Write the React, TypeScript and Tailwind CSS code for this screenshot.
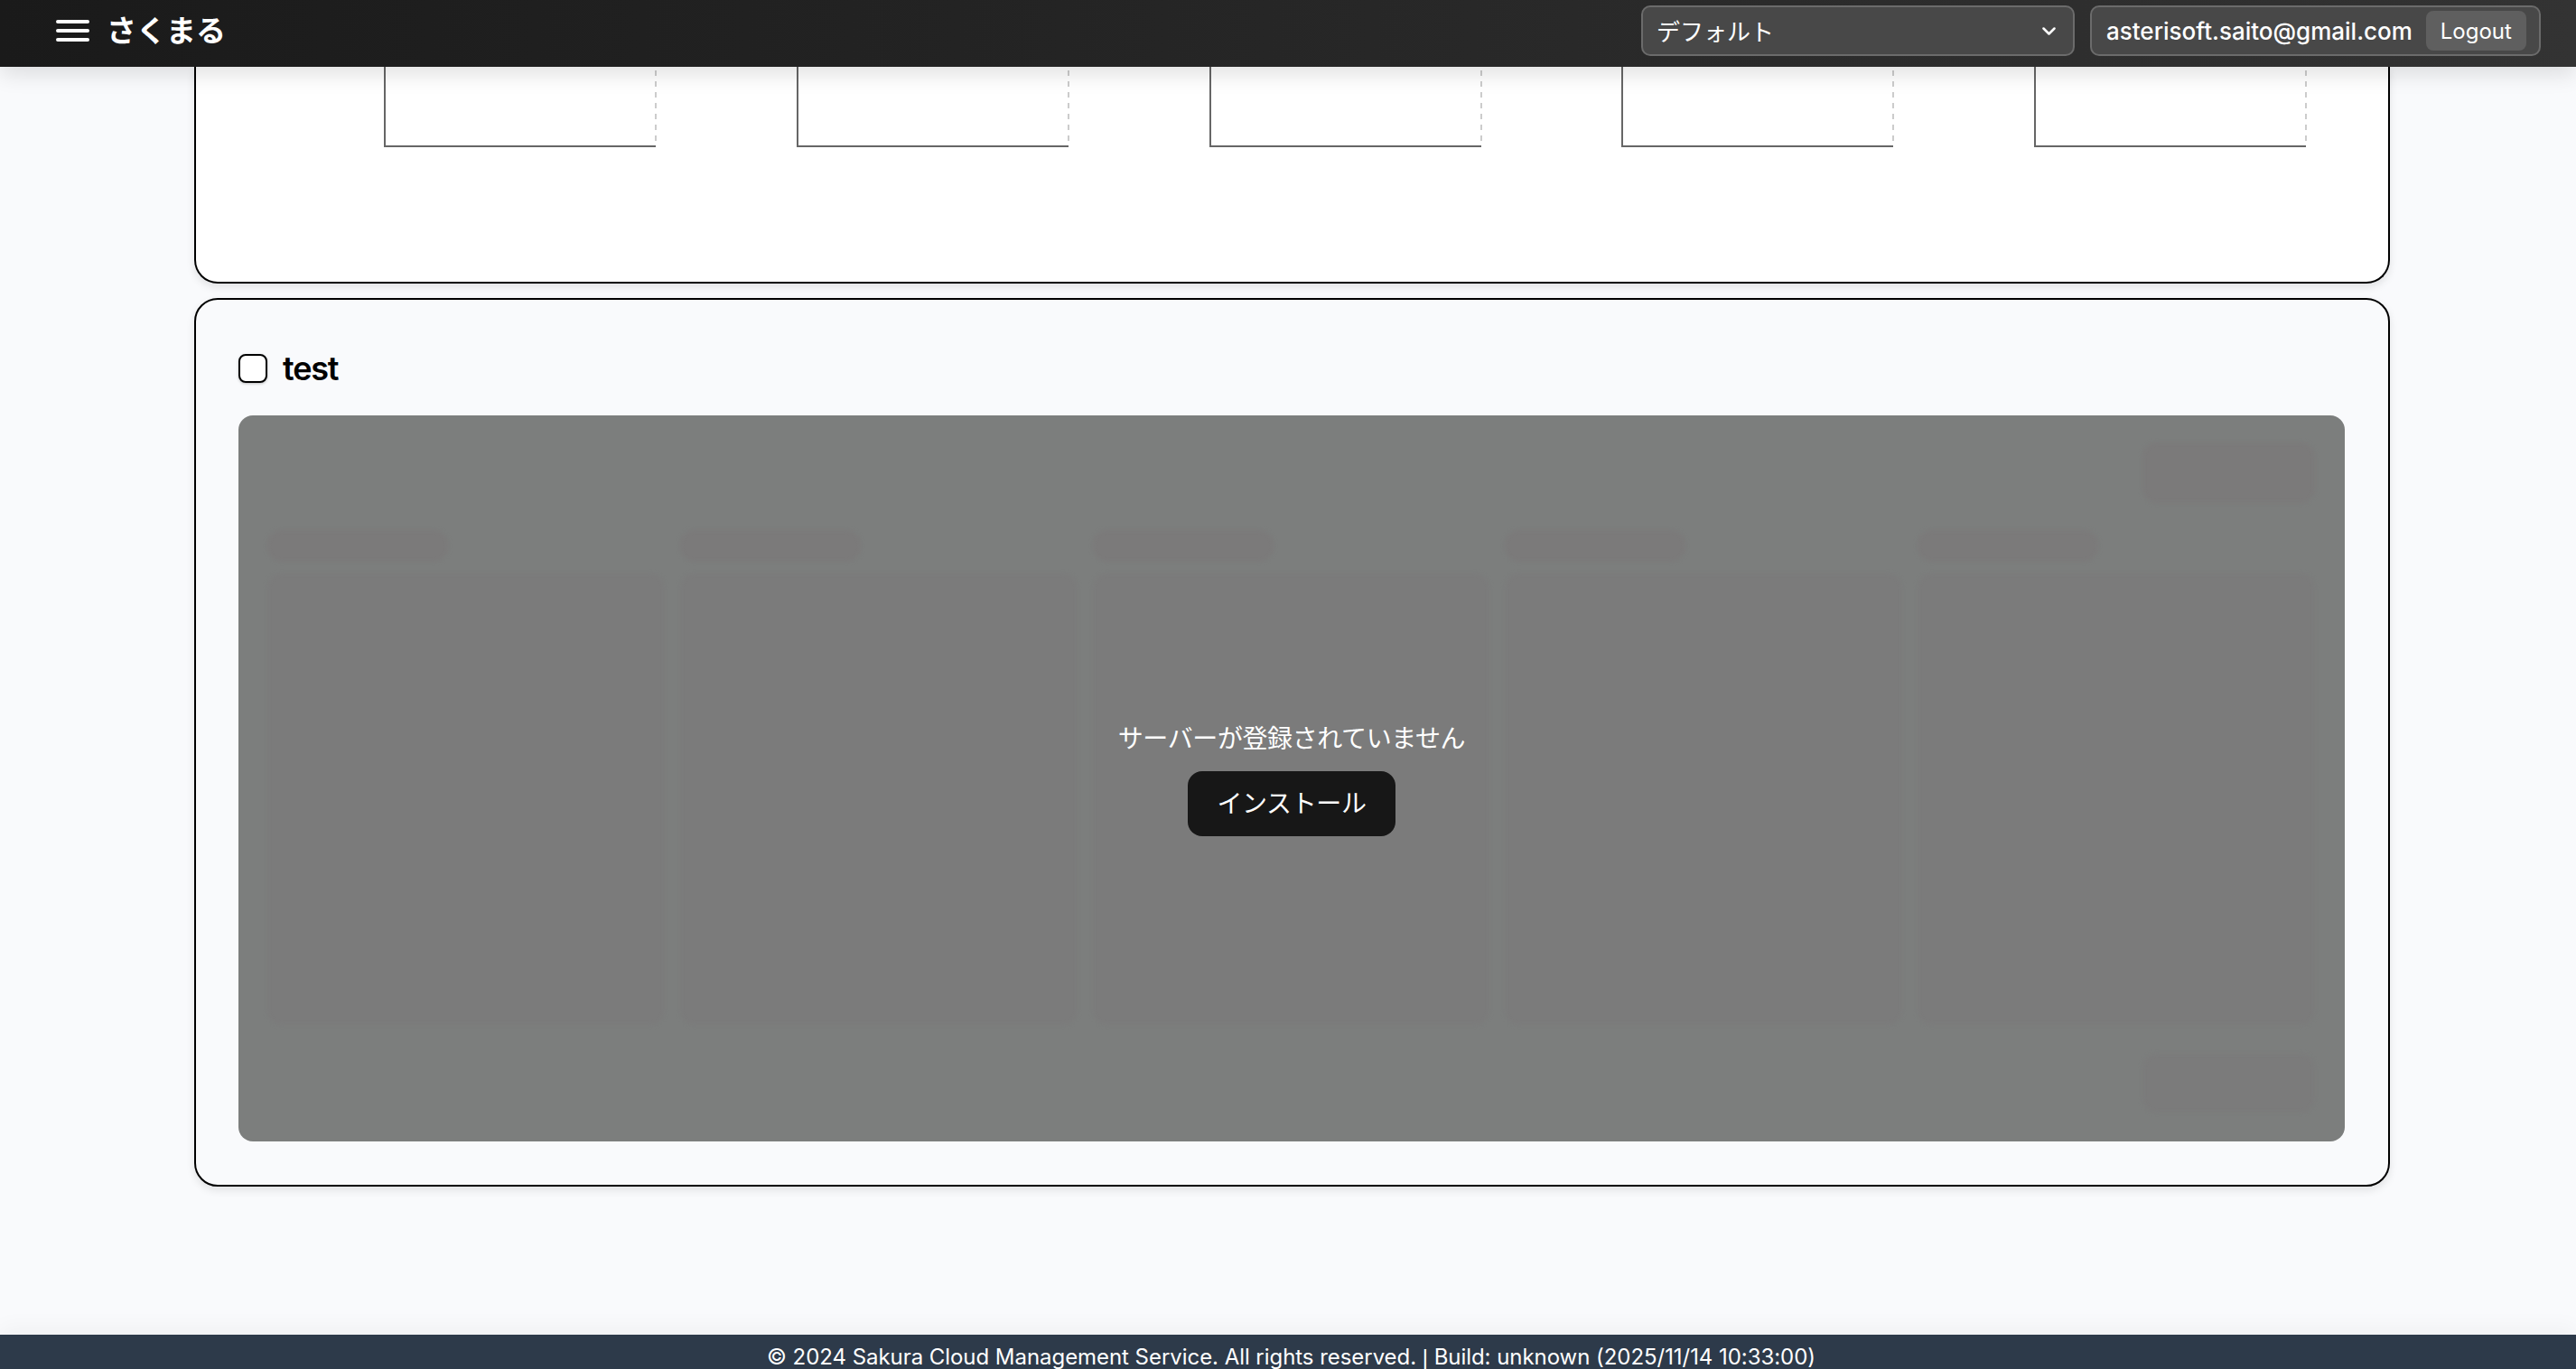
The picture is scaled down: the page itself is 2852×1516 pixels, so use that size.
const columns = [0, 1, 2, 3, 4];

const Header = () => (
  <header className="relative z-10 flex h-[74px] shrink-0 items-center justify-between bg-gradient-to-r from-[#1a1a1a] to-[#333333] pb-[6px] pl-[62px] pr-[39px] text-white shadow-[0_8px_24px_rgba(0,0,0,0.12)]">
    <div className="flex items-center gap-[19px]">
      <svg width="37" height="24" viewBox="0 0 37 24" fill="none" stroke="white" strokeWidth="4" strokeLinecap="round">
        <path d="M2 2h33M2 12h33M2 22h33" />
      </svg>
      <span className="text-[33px] font-bold leading-none">さくまる</span>
    </div>
    <div className="flex items-center gap-[17px]">
      <div className="flex h-[56px] w-[480px] items-center justify-between rounded-[10px] border-2 border-[#6b6b6b] bg-[#484848] pl-[15px] pr-[19px] text-[26px]">
        <span className="pt-[2px]">デフォルト</span>
        <svg width="15" height="9" viewBox="0 0 15 9" fill="none" stroke="white" strokeWidth="2.5" strokeLinecap="round" strokeLinejoin="round">
          <path d="M1.5 1.5l6 6 6-6" />
        </svg>
      </div>
      <div className="flex h-[56px] w-[499px] items-center gap-[15px] rounded-[10px] border-2 border-[#6b6b6b] bg-[#484848] pl-[16px] text-[26px] font-medium">
        <span>asterisoft.saito@gmail.com</span>
        <button className="flex h-[44px] w-[111px] items-center justify-center rounded-[8px] bg-[#5f5f5f] pt-[2px] text-[24px] font-normal">Logout</button>
      </div>
    </div>
  </header>
);

const TopCard = () => (
  <section className="flex h-[240px] shrink-0 justify-start rounded-b-[26px] border-2 border-t-0 border-black bg-white pl-[208px] shadow-[0_4px_10px_rgba(0,0,0,0.1)]">
    <div className="flex h-[89px] gap-[154.75px]">
      {columns.map((c) => (
        <svg key={c} width="302" height="89" viewBox="0 0 302 89" fill="none">
          <path d="M301 0V84" stroke="#cccccc" strokeWidth="2" strokeDasharray="6 6" strokeDashoffset="8" />
          <path d="M1 0V88H301" stroke="#666666" strokeWidth="2" />
        </svg>
      ))}
    </div>
  </section>
);

const Panel = () => (
  <div className="relative h-[804px] overflow-hidden rounded-[16px] bg-[#7c7e7d]">
    <div className="flex h-full flex-col pb-[32px] pl-[32px] pr-[33px] pt-[30px] blur-[2px]">
      <div className="ml-auto h-[67px] w-[191px] rounded-[16px] bg-[#7b7a7a]" />
      <div className="mt-[30px] grid flex-1 grid-cols-5 gap-x-[17px]">
        {columns.map((c) => (
          <div key={c} className="flex flex-col gap-[13px]">
            <div className="h-[35px] w-[200px] rounded-[16px] bg-[#7b7a7a]" />
            <div className="h-[500px] rounded-[16px] bg-[#7b7b7b]" />
          </div>
        ))}
      </div>
      <div className="ml-auto h-[65px] w-[191px] rounded-[16px] bg-[#7b7b7b]" />
    </div>
    <div className="absolute inset-0 flex flex-col items-center justify-center pt-[2px] text-white">
      <p className="text-[28px] leading-[36px] tracking-[-0.4px]">サーバーが登録されていません</p>
      <button className="mt-[18px] h-[72px] w-[230px] rounded-[16px] bg-[#171717] text-[28px] tracking-[-0.4px]">インストール</button>
    </div>
  </div>
);

const TestCard = () => (
  <section className="mt-[16px] h-[984px] shrink-0 rounded-[26px] border-2 border-black bg-[#f9fafc] pl-[47px] pr-[48px] pt-[60px] shadow-[0_4px_10px_rgba(0,0,0,0.1)]">
    <div className="flex h-[32px] items-center gap-[17px]">
      <span className="h-[32px] w-[32px] rounded-[8px] border-2 border-black bg-white shadow-[0_1px_3px_rgba(0,0,0,0.25)]" />
      <h2 className="text-[36px] font-semibold leading-none tracking-[-1.2px] text-black">test</h2>
    </div>
    <div className="mt-[36px]">
      <Panel />
    </div>
  </section>
);

const App = () => (
  <div className="flex h-screen flex-col overflow-hidden bg-[#f9fafc] font-['Inter','Noto_Sans_CJK_JP',sans-serif]">
    <Header />
    <main className="min-h-0 flex-1 overflow-hidden pl-[215px] pr-[206px]">
      <TopCard />
      <TestCard />
    </main>
    <footer className="h-[38px] shrink-0 bg-[#2d3a4a] pl-[7px] pt-[11px] text-center text-[24px] leading-[28px] tracking-[-0.05px] text-white shadow-[0_-8px_24px_rgba(0,0,0,0.04)]">
      © 2024 Sakura Cloud Management Service. All rights reserved. <span className="font-['Liberation_Sans',sans-serif]">|</span> Build: unknown (2025/11/14 10:33:00)
    </footer>
  </div>
);

export default App;
